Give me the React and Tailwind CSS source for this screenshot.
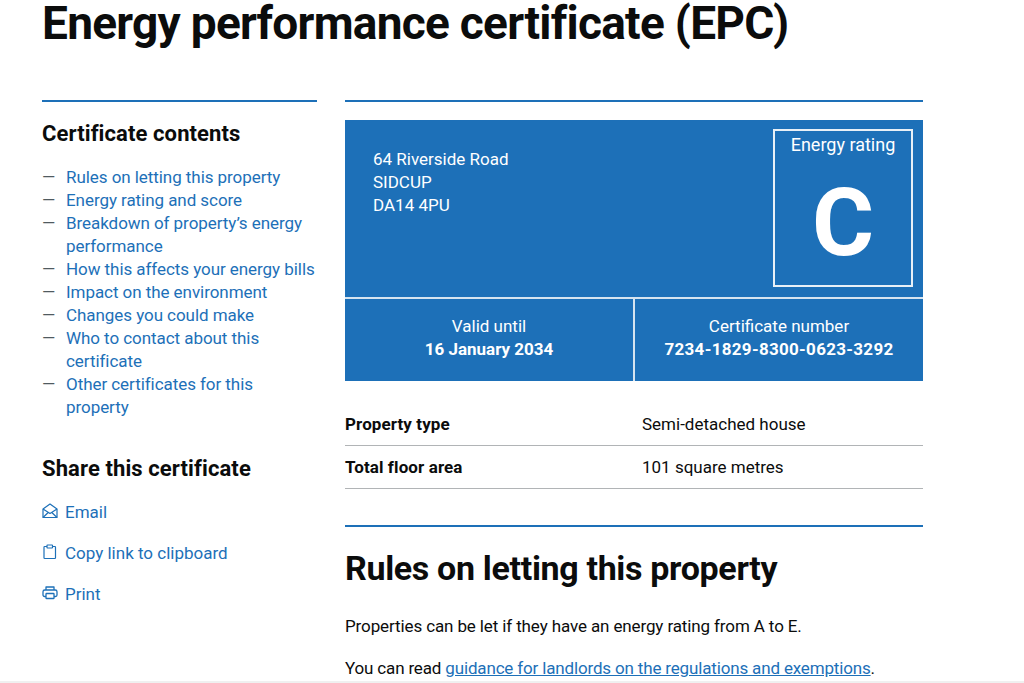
import React from 'react';

const contents = [
  'Rules on letting this property',
  'Energy rating and score',
  'Breakdown of property’s energy performance',
  'How this affects your energy bills',
  'Impact on the environment',
  'Changes you could make',
  'Who to contact about this certificate',
  'Other certificates for this property',
];

function MailIcon() {
  return (
    <svg className="mb-[3px] shrink-0" width="16" height="16" viewBox="0 0 16 16" fill="none" stroke="#1d70b8" strokeWidth="1.2" strokeLinejoin="round">
      <path d="M1 6 8 1l7 5v8.5H1z" />
      <path d="M1 6l7 4.5L15 6" />
      <path d="M1 14.5l5.2-5M15 14.5l-5.2-5" />
    </svg>
  );
}

function ClipboardIcon() {
  return (
    <svg className="mb-[3px] shrink-0" width="16" height="16" viewBox="0 0 16 16" fill="none" stroke="#1d70b8" strokeWidth="1.2" strokeLinejoin="round">
      <path d="M5 2.5H2.7a.7.7 0 0 0-.7.7v10.6c0 .4.3.7.7.7h10.1c.4 0 .7-.3.7-.7V3.2a.7.7 0 0 0-.7-.7h-2.3" />
      <rect x="5" y="1" width="5.5" height="3" rx=".5" />
    </svg>
  );
}

function PrintIcon() {
  return (
    <svg className="mb-[3px] shrink-0" width="16" height="16" viewBox="0 0 16 16" fill="none" stroke="#1d70b8" strokeWidth="1.3" strokeLinejoin="round">
      <path d="M4 5V2h8v3" />
      <path d="M4 11.5H2.5A1.5 1.5 0 0 1 1 10V6.8c0-1 .8-1.8 1.8-1.8h10.4c1 0 1.8.8 1.8 1.8V10a1.5 1.5 0 0 1-1.5 1.5H12" />
      <rect x="4" y="8.5" width="8" height="5" rx=".6" />
    </svg>
  );
}

export default function App() {
  return (
    <div className="h-[683px] overflow-hidden bg-white text-[#0b0c0c] border-b-2 border-[#f0f0f0] font-['Roboto',sans-serif]">
      <h1 className="pl-[42px] h-[100px] text-[46px] leading-[46px] font-bold tracking-[-0.72px]">
        Energy performance certificate (EPC)
      </h1>

      <div className="flex gap-[28px] pl-[42px]">
        <aside className="w-[275px] border-t-2 border-[#1d70b8] pt-[19px]">
          <h2 className="text-[22px] leading-[26px] font-bold tracking-[0.1px]">Certificate contents</h2>

          <ul className="mt-[19px] text-[17px] leading-[23px] tracking-[-0.06px] text-[#1d70b8]">
            {contents.map((item) => (
              <li key={item} className="flex">
                <span className="w-[24px] shrink-0 text-[#505a5f]">—</span>
                <a>{item}</a>
              </li>
            ))}
          </ul>

          <h2 className="mt-[37px] text-[22px] leading-[26px] font-bold tracking-[0.1px]">Share this certificate</h2>

          <div className="mt-[19px] flex flex-col gap-[18px] text-[17px] leading-[23px] text-[#1d70b8]">
            <a className="flex items-center gap-[7px]"><MailIcon />Email</a>
            <a className="flex items-center gap-[7px]"><ClipboardIcon />Copy link to clipboard</a>
            <a className="flex items-center gap-[7px]"><PrintIcon />Print</a>
          </div>
        </aside>

        <main className="w-[578px] border-t-2 border-[#1d70b8] pt-[18px]">
          <section className="bg-[#1d70b8] text-white text-[17px] leading-[23px]">
            <div className="flex h-[179px] justify-between pt-[9px] pr-[10px] border-b-2 border-[#d6e4f0]">
              <div className="pl-[28px] pt-[19px]">
                64 Riverside Road<br />SIDCUP<br />DA14 4PU
              </div>
              <div className="flex h-[158px] w-[140px] flex-col items-center border-2 border-[#e8f0f7] pt-[2px]">
                <span className="text-[18px]">Energy rating</span>
                <span className="mt-[20px] text-[95px] leading-[94px] font-bold">C</span>
              </div>
            </div>
            <div className="flex h-[82px]">
              <div className="flex w-[290px] flex-col items-center pt-[16px] border-r-2 border-[#d6e4f0]">
                <span>Valid until</span>
                <span className="font-bold">16 January 2034</span>
              </div>
              <div className="flex flex-1 flex-col items-center pt-[16px]">
                <span>Certificate number</span>
                <span className="font-bold tracking-[0.3px]">7234-1829-8300-0623-3292</span>
              </div>
            </div>
          </section>

          <dl className="mt-[22px] text-[17px] leading-[23px]">
            <div className="flex h-[43px] items-center border-b border-[#b1b4b6] pt-[1px]">
              <dt className="w-[297px] font-bold tracking-[0.1px]">Property type</dt>
              <dd>Semi-detached house</dd>
            </div>
            <div className="flex h-[43px] items-center border-b border-[#b1b4b6]">
              <dt className="w-[297px] font-bold tracking-[0.1px]">Total floor area</dt>
              <dd>101 square metres</dd>
            </div>
          </dl>

          <div className="mt-[36px] border-t-2 border-[#1d70b8] pt-[19px]">
            <h2 className="text-[34px] leading-[44px] font-bold tracking-[-0.33px]">Rules on letting this property</h2>
            <p className="mt-[25px] text-[17px] leading-[23px] tracking-[-0.12px]">
              Properties can be let if they have an energy rating from A to E.
            </p>
            <p className="mt-[19px] text-[17px] leading-[23px] tracking-[-0.16px]">
              You can read{' '}
              <a className="text-[#1d70b8] underline">guidance for landlords on the regulations and exemptions</a>.
            </p>
          </div>
        </main>
      </div>
    </div>
  );
}
